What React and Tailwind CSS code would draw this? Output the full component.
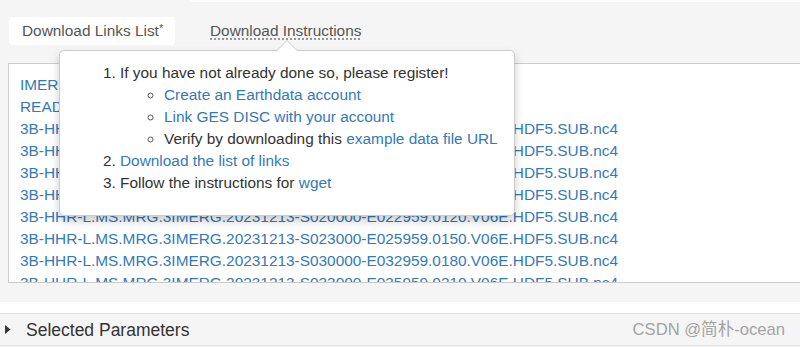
import React from "react";

const files = [
  "S000000-E002959.0000",
  "S003000-E005959.0030",
  "S010000-E012959.0060",
  "S013000-E015959.0090",
  "S020000-E022959.0120",
  "S023000-E025959.0150",
  "S030000-E032959.0180",
  "S033000-E035959.0210",
];

export default function App() {
  return (
    <div
      className="relative w-[800px] h-[347px] overflow-hidden bg-[#f5f5f5] text-[15.4px] leading-[22px] text-[#333]"
      style={{ fontFamily: '"Liberation Sans", Arial, "Noto Sans CJK SC", sans-serif' }}
    >
      {/* top strip */}
      <div className="flex h-[2px]">
        <div className="w-[190px]" />
        <div className="flex-1 bg-white" />
      </div>

      {/* tabs */}
      <div className="mt-[15px] flex items-center">
        <div className="ml-[9px] flex h-[28px] w-[166px] items-center rounded-[4px] bg-white pl-[13px] text-[#555]">
          Download Links List<sup className="relative -top-[3px] text-[11px]">*</sup>
        </div>
        <div className="ml-[35px] text-[#555] underline decoration-dotted decoration-[#777] underline-offset-[3px]">
          Download Instructions
        </div>
      </div>

      {/* links box */}
      <div className="ml-[8px] mt-[18px] h-[220px] overflow-hidden border border-r-0 border-[#ccc] bg-white pl-[11px] pt-[10px] text-[#337ab7]">
        <div>IMERG_HHR_Technical_Documentation.pdf</div>
        <div>README.GPM.IMERG.pdf</div>
        {files.map((f) => (
          <div key={f} className="whitespace-nowrap">
            3B-HHR-L.MS.MRG.3IMERG.20231213-{f}.V06E.HDF5.SUB.nc4
          </div>
        ))}
      </div>

      {/* gray gap + white stripe */}
      <div className="h-[19px]" />
      <div className="h-[11px] bg-white" />

      {/* selected parameters panel */}
      <div className="flex h-[33px] items-center border-y border-[#e3e3e3] bg-[#f5f5f5]">
        <svg className="ml-[5px]" width="6" height="9" viewBox="0 0 6 9">
          <polygon points="0,0 5.5,4.5 0,9" fill="#333" />
        </svg>
        <span className="ml-[15px] text-[17.5px] text-[#333]">Selected Parameters</span>
        <span className="ml-auto mr-[15px] text-[16.6px] text-[#a3a3a3]">CSDN @简朴-ocean</span>
      </div>

      {/* popover */}
      <div className="absolute left-[59px] top-[50px] w-[456px] h-[166px] rounded-[5px] border border-[#ccc] bg-white shadow-[0_5px_10px_rgba(0,0,0,0.2)]">
        {/* arrow */}
        <div className="absolute -top-[11px] left-[216px] h-0 w-0 border-x-[11px] border-b-[11px] border-x-transparent border-b-[#ccc]" />
        <div className="absolute -top-[10px] left-[217px] h-0 w-0 border-x-[10px] border-b-[10px] border-x-transparent border-b-white" />
        <ol className="list-decimal pl-[60px] pt-[11px] text-[#333]">
          <li>
            If you have not already done so, please register!
            <ul className="list-[circle] pl-[44px] marker:text-[#555]">
              <li>
                <span className="text-[#337ab7]">Create an Earthdata account</span>
              </li>
              <li>
                <span className="text-[#337ab7]">Link GES DISC with your account</span>
              </li>
              <li>
                Verify by downloading this{" "}
                <span className="text-[#337ab7]">example data file URL</span>
              </li>
            </ul>
          </li>
          <li>
            <span className="text-[#337ab7]">Download the list of links</span>
          </li>
          <li>
            Follow the instructions for <span className="text-[#337ab7]">wget</span>
          </li>
        </ol>
      </div>
    </div>
  );
}
